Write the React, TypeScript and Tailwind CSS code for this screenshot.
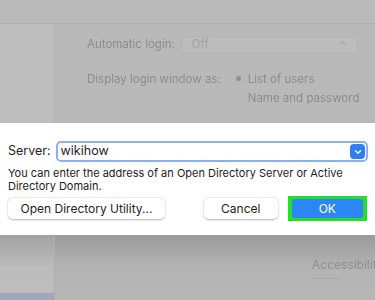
import React from "react";

export default function App() {
  const font = { fontFamily: "Inter, 'Liberation Sans', Arial, sans-serif" };
  return (
    <div className="w-[375px] h-[300px] overflow-hidden bg-[#b9b9b9] flex flex-col" style={font}>
      {/* top blurred settings area */}
      <div className="h-[123px] flex flex-col shrink-0">
        <div className="h-[23px] bg-[#bababa]" />
        <div className="flex flex-1 border-t border-[#b0b0b0]">
          <div className="w-[55px] bg-[#bdbdbd] border-r border-[#b3b3b3]" />
          <div className="flex-1 flex flex-col pl-[32px] pt-[13px] text-[11.5px] text-[#8c8c8c] blur-[0.4px]">
            <div className="flex items-center h-[16px]">
              <span>Automatic login:</span>
              <div className="ml-[6px] flex-1 mr-[17px] h-[18px] rounded-[4px] bg-[#bcbcbc] border border-[#b4b4b4] flex items-center justify-between px-[10px]">
                <span className="text-[#a2a2a2]">Off</span>
                <span className="text-[10px] text-[#a0a0a0]">⌃</span>
              </div>
            </div>
            <div className="flex mt-[18px]">
              <span>Display login window as:</span>
              <div className="ml-[15px] mt-[5px] w-[5px] h-[5px] rounded-full bg-[#8e8e8e]" />
              <div className="ml-[7px] flex flex-col leading-[19px] -mt-[1px]">
                <span>List of users</span>
                <span>Name and password</span>
              </div>
            </div>
          </div>
        </div>
      </div>

      {/* dialog */}
      <div className="h-[112px] bg-white shrink-0 flex flex-col px-[8px] pt-[18px] text-[#1e1e1e]">
        <div className="flex items-center">
          <span className="text-[12.5px] mr-[5px]">Server:</span>
          <div className="flex-1 h-[21px] mr-[-1px] rounded-[5px] border-[2px] border-[#8fb0e6] flex items-center pl-[3px] pr-[1px]">
            <span className="text-[12.5px] flex-1">wikihow</span>
            <div className="w-[15px] h-[15px] rounded-[4px] bg-[#2f7ff2] flex items-center justify-center">
              <svg width="8" height="6" viewBox="0 0 8 6">
                <path d="M1.5 1.8 L4 4.2 L6.5 1.8" stroke="white" strokeWidth="1.4" fill="none" strokeLinecap="round" strokeLinejoin="round" />
              </svg>
            </div>
          </div>
        </div>
        <div className="mt-[5px] text-[11px] leading-[13px] text-[#222]">
          You can enter the address of an Open Directory Server or Active Directory Domain.
        </div>
        <div className="flex items-center mt-[3px]">
          <div className="w-[160px] h-[21px] rounded-[5px] bg-white shadow-[0_0.5px_2px_rgba(0,0,0,0.3)] flex items-center justify-center text-[12px]">
            Open Directory Utility...
          </div>
          <div className="ml-[39px] w-[75px] h-[21px] rounded-[5px] bg-white shadow-[0_0.5px_2px_rgba(0,0,0,0.3)] flex items-center justify-center text-[12px]">
            Cancel
          </div>
          <div className="ml-[10px] w-[81px] h-[25px] bg-[#22e02a] flex items-center justify-center">
            <div className="w-[71px] h-[19px] rounded-[3px] bg-[#2c86f5] flex items-center justify-center text-[12px] text-white">
              OK
            </div>
          </div>
        </div>
      </div>

      {/* bottom blurred area */}
      <div className="flex-1 flex bg-gradient-to-b from-[#9a9a9a] via-[#b4b4b4] to-[#b6b6b6]">
        <div className="w-[55px] flex flex-col border-r border-[#adadad] bg-gradient-to-b from-[#a2a2a2] via-[#bcbcbc] to-[#bdbdbd]">
          <div className="flex-1" />
          <div className="h-[7px] bg-[#9fa8b8]" />
        </div>
        <div className="flex-1 flex justify-end pt-[21px] overflow-hidden">
          <div className="w-[63px] flex flex-col overflow-hidden">
            <span className="text-[12px] text-[#8e8e8e] blur-[0.4px] whitespace-nowrap">Accessibility</span>
            <div className="mt-[4px] w-[30px] h-[1px] bg-[#ababab]" />
          </div>
        </div>
      </div>
    </div>
  );
}
